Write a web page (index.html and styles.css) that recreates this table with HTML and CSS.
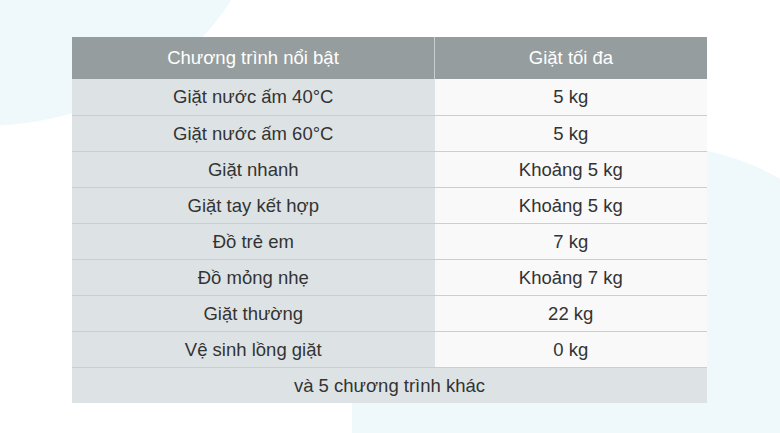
FILE: index.html
```html
<!DOCTYPE html>
<html lang="vi">
<head>
<meta charset="utf-8">
<link rel="stylesheet" href="styles.css">
</head>
<body>
<div class="page">
  <div class="blob blob-tl"></div>
  <div class="blob blob-br"></div>
  <table class="spec">
    <thead>
      <tr><th class="c1">Chương trình nổi bật</th><th class="c2">Giặt tối đa</th></tr>
    </thead>
    <tbody>
      <tr><td class="c1">Giặt nước ấm 40°C</td><td class="c2">5 kg</td></tr>
      <tr><td class="c1">Giặt nước ấm 60°C</td><td class="c2">5 kg</td></tr>
      <tr><td class="c1">Giặt nhanh</td><td class="c2">Khoảng 5 kg</td></tr>
      <tr><td class="c1">Giặt tay kết hợp</td><td class="c2">Khoảng 5 kg</td></tr>
      <tr><td class="c1">Đồ trẻ em</td><td class="c2">7 kg</td></tr>
      <tr><td class="c1">Đồ mỏng nhẹ</td><td class="c2">Khoảng 7 kg</td></tr>
      <tr><td class="c1">Giặt thường</td><td class="c2">22 kg</td></tr>
      <tr><td class="c1">Vệ sinh lồng giặt</td><td class="c2">0 kg</td></tr>
      <tr><td class="more" colspan="2">và 5 chương trình khác</td></tr>
    </tbody>
  </table>
</div>
</body>
</html>
```
FILE: styles.css
```css
html, body {
  margin: 0;
  padding: 0;
  background: #ffffff;
}
.page {
  position: relative;
  width: 780px;
  height: 433px;
  overflow: hidden;
  font-family: "Liberation Sans", Arial, sans-serif;
  padding-top: 37px;
  box-sizing: border-box;
}
.blob {
  position: absolute;
  background: #eff8fa;
  z-index: 0;
}
.blob-tl {
  left: -300px;
  top: -326px;
  width: 560px;
  height: 452px;
  border-radius: 50%;
}
.blob-br {
  left: 352px;
  top: 145px;
  width: 560px;
  height: 400px;
  border-radius: 0 260px 0 0;
}
.spec {
  position: relative;
  z-index: 1;
  margin-left: 72px;
  width: 635px;
  border-collapse: collapse;
  table-layout: fixed;
  font-size: 18.5px;
  color: #333333;
}
.spec th, .spec td {
  text-align: center;
  padding: 0;
  font-weight: normal;
}
.spec th {
  height: 42px;
  background: #959d9e;
  color: #ffffff;
}
.spec thead .c1 {
  width: 362px;
  border-right: 1px solid #c9cecf;
}
.spec td {
  height: 35px;
  border-top: 1px solid #c9ced0;
}
.spec tbody tr:first-child td {
  border-top: none;
  height: 36px;
}
.spec td.c1 {
  background: #dde3e5;
}
.spec td.c2 {
  background: #f9f9f9;
}
.spec td.more {
  background: #dde3e5;
  height: 35px;
}
```
